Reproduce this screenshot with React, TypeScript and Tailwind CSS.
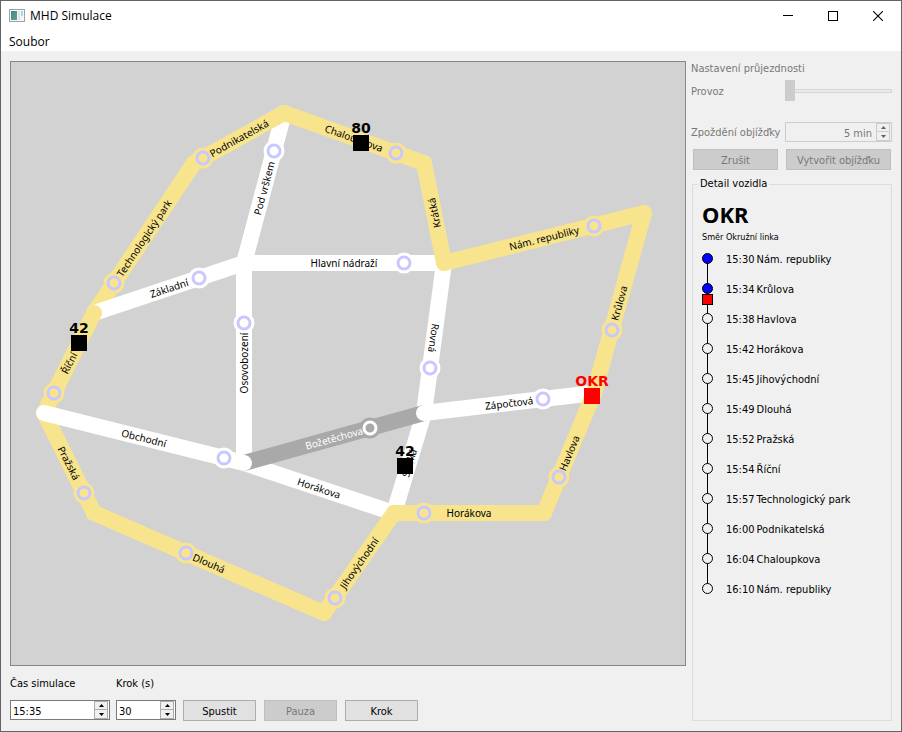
import React from 'react';

type Point = [number, number];
type Tone = 'main' | 'side' | 'closed';

interface Street {
  name: string;
  from: Point;
  to: Point;
  stop?: Point;
  tone: Tone;
}

const roadColor: Record<Tone, string> = {
  main: '#f7e48c',
  side: '#ffffff',
  closed: '#a9a9a9',
};

// Listed in paint order: later streets cover the ends of earlier ones.
const streets: Street[] = [
  { name: 'Technologický park', from: [94, 313], to: [194, 163], stop: [114, 283], tone: 'main' },
  { name: 'Pražská', from: [44, 413], to: [94, 513], stop: [84, 493], tone: 'main' },
  { name: 'Základní', from: [94, 313], to: [244, 263], stop: [199, 278], tone: 'side' },
  { name: 'Pod vrškem', from: [244, 263], to: [284, 113], stop: [274, 151], tone: 'side' },
  { name: 'Hlavní nádraží', from: [244, 263], to: [444, 263], stop: [404, 263], tone: 'side' },
  { name: 'Osovobození', from: [244, 463], to: [244, 263], stop: [244, 323], tone: 'side' },
  { name: 'Rovná', from: [444, 263], to: [424, 413], stop: [430, 368], tone: 'side' },
  { name: 'Horákova', from: [244, 463], to: [394, 513], tone: 'side' },
  { name: 'Široká', from: [394, 513], to: [424, 413], tone: 'side' },
  { name: 'Božetěchova', from: [244, 463], to: [424, 413], stop: [370, 428], tone: 'closed' },
  { name: 'Zápočtová', from: [424, 413], to: [594, 393], stop: [543, 399], tone: 'side' },
  { name: 'Říční', from: [44, 413], to: [94, 313], stop: [54, 393], tone: 'main' },
  { name: 'Obchodní', from: [44, 413], to: [244, 463], stop: [224, 458], tone: 'side' },
  { name: 'Podnikatelská', from: [194, 163], to: [284, 113], stop: [203, 158], tone: 'main' },
  { name: 'Chaloupkova', from: [284, 113], to: [424, 163], stop: [396, 153], tone: 'main' },
  { name: 'Krátká', from: [444, 263], to: [424, 163], tone: 'main' },
  { name: 'Nám. republiky', from: [444, 263], to: [644, 213], stop: [594, 226], tone: 'main' },
  { name: 'Krůlova', from: [594, 393], to: [644, 213], stop: [612, 330], tone: 'main' },
  { name: 'Havlova', from: [544, 513], to: [594, 393], stop: [559, 477], tone: 'main' },
  { name: 'Horákova', from: [394, 513], to: [544, 513], stop: [424, 513], tone: 'main' },
  { name: 'Jihovýchodní', from: [324, 613], to: [394, 513], stop: [335, 598], tone: 'main' },
  { name: 'Dlouhá', from: [94, 513], to: [324, 613], stop: [186, 553], tone: 'main' },
];

const vehicles = [
  { line: '80', x: 361, y: 143, color: '#000000' },
  { line: '42', x: 79, y: 343, color: '#000000' },
  { line: '42', x: 405, y: 466, color: '#000000' },
  { line: 'OKR', x: 592, y: 396, color: '#ff0000' },
];

const timetable = [
  ['15:30', 'Nám. republiky'],
  ['15:34', 'Krůlova'],
  ['15:38', 'Havlova'],
  ['15:42', 'Horákova'],
  ['15:45', 'Jihovýchodní'],
  ['15:49', 'Dlouhá'],
  ['15:52', 'Pražská'],
  ['15:54', 'Říční'],
  ['15:57', 'Technologický park'],
  ['16:00', 'Podnikatelská'],
  ['16:04', 'Chaloupkova'],
  ['16:10', 'Nám. republiky'],
];

function CityMap() {
  return (
    <svg viewBox="11 62 674 603" className="block h-full w-full" role="img" aria-label="Mapa">
      {streets.map((s, i) => {
        const color = roadColor[s.tone];
        return (
          <g key={i}>
            <line x1={s.from[0]} y1={s.from[1]} x2={s.to[0]} y2={s.to[1]} stroke={color} strokeWidth="16" strokeLinecap="round" />
            {s.stop && <circle cx={s.stop[0]} cy={s.stop[1]} r="10.5" fill={color} />}
            {s.stop && (
              <circle cx={s.stop[0]} cy={s.stop[1]} r="6" fill="none" stroke={s.tone === 'closed' ? '#ffffff' : '#c8c8ff'} strokeWidth="3" />
            )}
          </g>
        );
      })}
      {streets.map((s, i) => {
        const angle = (Math.atan2(s.to[1] - s.from[1], s.to[0] - s.from[0]) * 180) / Math.PI;
        const x = (s.from[0] + s.to[0]) / 2;
        const y = (s.from[1] + s.to[1]) / 2;
        return (
          <text
            key={i}
            transform={`translate(${x} ${y}) rotate(${angle})`}
            y="4"
            textAnchor="middle"
            className="text-[10px]"
            style={{ fill: s.tone === 'closed' ? '#ffffff' : '#000000' }}
          >
            {s.name}
          </text>
        );
      })}
      {vehicles.map((v, i) => (
        <g key={i} fill={v.color}>
          <rect x={v.x - 8} y={v.y - 8} width="16" height="16" />
          <text x={v.x} y={v.y - 10} textAnchor="middle" className="font-['DejaVu_Sans',sans-serif] text-[14px] font-bold">
            {v.line}
          </text>
        </g>
      ))}
    </svg>
  );
}

function Spinner({ id, value, className, disabled = false }: { id: string; value: string; className: string; disabled?: boolean }) {
  const arrow = disabled ? '#606060' : '#000000';
  const half = 'flex h-2 w-full items-center justify-center bg-[#f0f0f0]';
  return (
    <div className={`flex h-5 items-center border pr-px ${disabled ? 'border-[#cccccc] bg-[#f0f0f0]' : 'border-[#7a7a7a] bg-white'} ${className}`}>
      <input
        id={id}
        type="text"
        defaultValue={value}
        disabled={disabled}
        className={`h-full w-0 min-w-0 flex-1 bg-transparent pt-0.5 outline-none ${disabled ? 'pr-1 text-right text-[#787878]' : 'pl-0.5'}`}
      />
      <span className={`flex w-3.5 flex-col divide-y border ${disabled ? 'divide-[#cccccc] border-[#cccccc]' : 'divide-[#acacac] border-[#acacac]'}`}>
        <button type="button" aria-label="Zvýšit" disabled={disabled} className={half}>
          <svg width="5" height="3" viewBox="0 0 5 3"><path d="M0 3L2.5 0L5 3Z" fill={arrow} /></svg>
        </button>
        <button type="button" aria-label="Snížit" disabled={disabled} className={half}>
          <svg width="5" height="3" viewBox="0 0 5 3"><path d="M0 0L2.5 3L5 0Z" fill={arrow} /></svg>
        </button>
      </span>
    </div>
  );
}

function PushButton({ children, className, disabled = false }: { children: React.ReactNode; className: string; disabled?: boolean }) {
  return (
    <button
      type="button"
      disabled={disabled}
      className={`h-[21px] border pt-0.5 leading-none ${disabled ? 'border-[#bfbfbf] bg-[#cccccc] text-[#787878]' : 'border-[#adadad] bg-[#e1e1e1]'} ${className}`}
    >
      {children}
    </button>
  );
}

function TitleBar() {
  return (
    <header className="flex h-[30px] items-center bg-white pl-2 font-['Open_Sans','Noto_Sans',sans-serif] text-[12px]">
      <svg width="16" height="14" viewBox="0 0 16 14" className="mr-[5px]">
        <defs>
          <linearGradient id="app" x1="0" y1="0" x2="1" y2="1">
            <stop offset="0" stopColor="#4a7f9e" />
            <stop offset="1" stopColor="#59a57b" />
          </linearGradient>
        </defs>
        <rect x="0.5" y="0.5" width="15" height="12" fill="#f4f6f8" stroke="#9aa3aa" />
        <rect x="2" y="2" width="6" height="9" fill="url(#app)" />
        <rect x="9" y="2" width="2" height="9" fill="#dfe4e8" />
        <rect x="12" y="2" width="2" height="5" fill="#b7d3c4" />
      </svg>
      <h1 className="flex-1">MHD Simulace</h1>
      <button type="button" aria-label="Minimalizovat" className="flex h-full w-[46px] items-center justify-center">
        <svg width="10" height="10" viewBox="0 0 10 10"><path d="M0 4.5H10" stroke="#000" /></svg>
      </button>
      <button type="button" aria-label="Maximalizovat" className="flex h-full w-11 items-center justify-center">
        <svg width="10" height="10" viewBox="0 0 10 10"><rect x="0.5" y="0.5" width="9" height="9" fill="none" stroke="#000" /></svg>
      </button>
      <button type="button" aria-label="Zavřít" className="flex h-full w-[46px] items-center justify-center">
        <svg width="10" height="10" viewBox="0 0 10 10"><path d="M0 0L10 10M10 0L0 10" stroke="#000" strokeWidth="1.1" /></svg>
      </button>
    </header>
  );
}

function VehicleDetail() {
  const last = timetable.length - 1;
  return (
    <fieldset className="ml-px flex-1 border border-[#dcdcdc] pl-[9px]">
      <legend className="-ml-1 px-0.5 leading-[14px]">Detail vozidla</legend>
      <h2 className="mt-2 font-['Noto_Sans','Open_Sans',sans-serif] text-[22px] leading-[30px] font-bold">OKR</h2>
      <p className="text-[9px] leading-4">Směr Okružní linka</p>
      <div className="flex gap-[13px]">
        <svg width="11" height="360" viewBox="0 0 11 360">
          <path d={`M5.5 14V${14 + 30 * last}`} stroke="#000" />
          {timetable.map((_, i) => (
            <circle key={i} cx="5.5" cy={13.5 + 30 * i} r="5" fill={i < 2 ? '#0000ff' : '#f0f0f0'} stroke="#000" />
          ))}
          <rect x="0.5" y="49.5" width="10" height="10" fill="#ff0000" stroke="#000" />
        </svg>
        <ol>
          {timetable.map(([time, stop], i) => (
            <li key={i} className="flex h-[30px] items-center gap-0.5">
              <time>{time}</time>
              <span>{stop}</span>
            </li>
          ))}
        </ol>
      </div>
    </fieldset>
  );
}

export default function App() {
  return (
    <div className="flex h-screen flex-col border border-[#646464] bg-[#f0f0f0] font-['DejaVu_Sans_Condensed','Noto_Sans',sans-serif] text-[11px] text-black">
      <TitleBar />
      <nav className="flex h-5 items-center bg-white pl-2 font-['Open_Sans','Noto_Sans',sans-serif] text-[12px]">
        <button type="button" className="pt-0.5">Soubor</button>
      </nav>
      <main className="flex min-h-0 flex-1 gap-[5px] px-[9px] py-2.5">
        <section className="flex min-w-0 flex-1 flex-col">
          <div className="min-h-0 flex-1 border border-[#828790] bg-[#d2d2d2] font-['Noto_Sans','Open_Sans',sans-serif]">
            <CityMap />
          </div>
          <div className="flex items-end pt-2">
            <div className="w-[106px] pb-px">
              <label htmlFor="sim-time" className="flex h-[18px] items-center pt-0.5">Čas simulace</label>
              <Spinner id="sim-time" value="15:35" className="mt-2 w-[100px]" />
            </div>
            <div className="w-[67px] pb-px">
              <label htmlFor="sim-step" className="flex h-[18px] items-center pt-0.5">Krok (s)</label>
              <Spinner id="sim-step" value="30" className="mt-2 w-[60px]" />
            </div>
            <div className="flex gap-2">
              <PushButton className="w-[73px]">Spustit</PushButton>
              <PushButton className="w-[73px]" disabled>Pauza</PushButton>
              <PushButton className="w-[73px]">Krok</PushButton>
            </div>
          </div>
        </section>
        <aside className="flex w-[201px] flex-col">
          <p className="leading-4 text-[#787878]">Nastavení průjezdnosti</p>
          <div className="mt-0.5 flex h-6 items-center justify-between text-[#787878]">
            <label htmlFor="traffic" className="pt-0.5">Provoz</label>
            <input
              id="traffic"
              type="range"
              min={0}
              max={100}
              defaultValue={0}
              disabled
              className="h-[21px] w-[107px] appearance-none bg-transparent [&::-webkit-slider-runnable-track]:h-1 [&::-webkit-slider-runnable-track]:border [&::-webkit-slider-runnable-track]:border-[#d6d6d6] [&::-webkit-slider-runnable-track]:bg-[#e7eaea] [&::-webkit-slider-thumb]:-mt-[10px] [&::-webkit-slider-thumb]:-ml-px [&::-webkit-slider-thumb]:h-[21px] [&::-webkit-slider-thumb]:w-2.5 [&::-webkit-slider-thumb]:appearance-none [&::-webkit-slider-thumb]:bg-[#cccccc]"
            />
          </div>
          <div className="mt-[19px] flex items-center justify-between text-[#787878]">
            <label htmlFor="delay" className="pt-0.5">Zpoždění objížďky</label>
            <Spinner id="delay" value="5 min" className="w-[107px] shrink-0" disabled />
          </div>
          <div className="mt-[7px] flex justify-between px-px pl-0.5">
            <PushButton className="w-[85px]" disabled>Zrušit</PushButton>
            <PushButton className="w-[105px]" disabled>Vytvořit objížďku</PushButton>
          </div>
          <div className="mt-[7px] flex flex-1">
            <VehicleDetail />
          </div>
        </aside>
      </main>
    </div>
  );
}
